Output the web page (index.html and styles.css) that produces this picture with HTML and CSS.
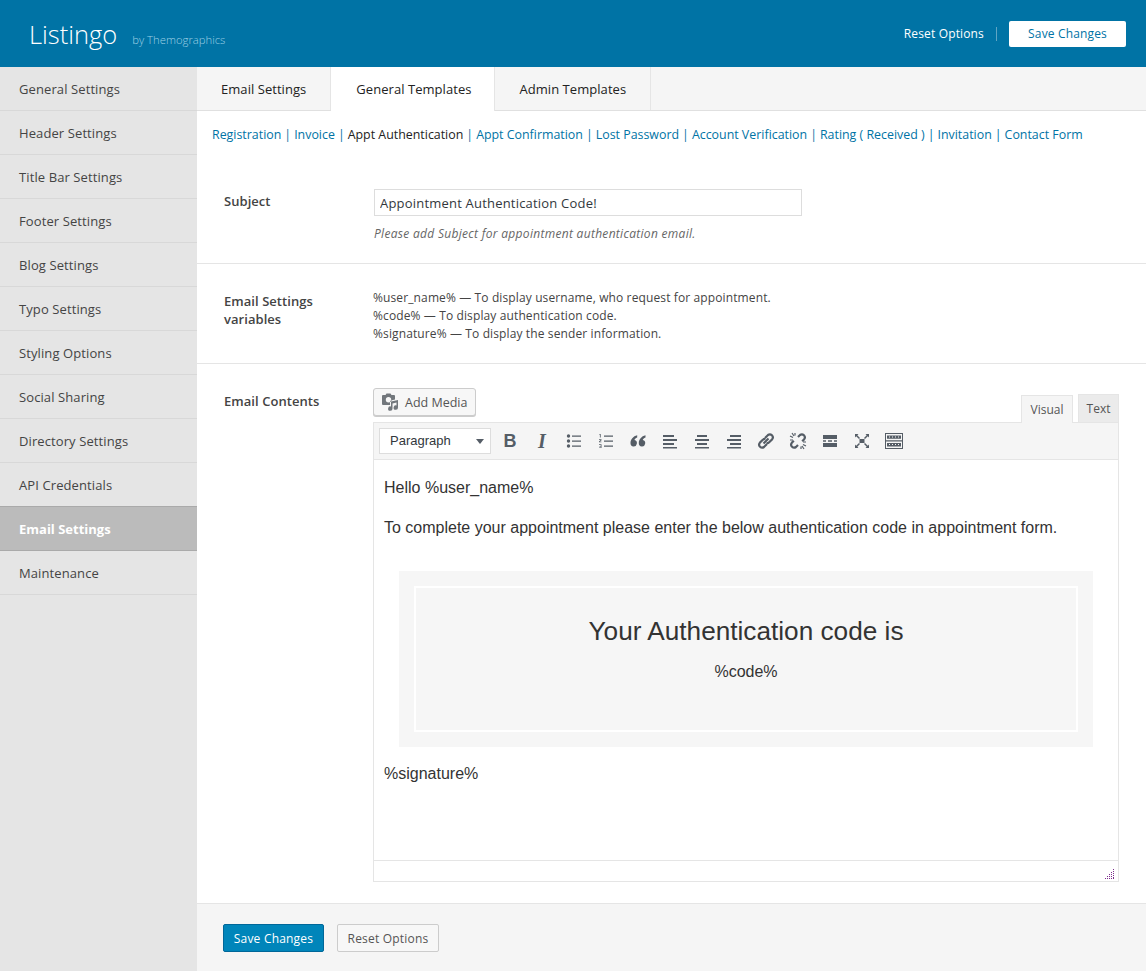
FILE: index.html
```html
<!DOCTYPE html>
<html lang="en">
<head>
<meta charset="utf-8">
<title>Listingo Options</title>
<link rel="stylesheet" href="styles.css">
</head>
<body>
<header class="topbar">
    <div class="brand">
        <span class="brand-name">Listingo</span>
        <span class="brand-by">by Themographics</span>
    </div>
    <div class="top-actions">
        <a class="top-reset">Reset Options</a>
        <button class="top-save" type="button">Save Changes</button>
    </div>
</header>

<div class="layout">
    <nav class="sidebar">
        <a>General Settings</a>
        <a>Header Settings</a>
        <a>Title Bar Settings</a>
        <a>Footer Settings</a>
        <a>Blog Settings</a>
        <a>Typo Settings</a>
        <a>Styling Options</a>
        <a>Social Sharing</a>
        <a>Directory Settings</a>
        <a>API Credentials</a>
        <a class="active">Email Settings</a>
        <a>Maintenance</a>
    </nav>

    <main class="content">
        <div class="tabs">
            <a class="tab">Email Settings</a>
            <a class="tab current">General Templates</a>
            <a class="tab">Admin Templates</a>
        </div>

        <div class="subnav">
            <a>Registration</a><i>|</i><a>Invoice</a><i>|</i><b>Appt Authentication</b><i>|</i><a>Appt Confirmation</a><i>|</i><a>Lost Password</a><i>|</i><a>Account Verification</a><i>|</i><a>Rating ( Received )</a><i>|</i><a>Invitation</a><i>|</i><a>Contact Form</a>
        </div>

        <section class="field field-subject">
            <h4 class="field-label">Subject</h4>
            <div class="field-body">
                <input class="text-input" type="text" value="Appointment Authentication Code!">
                <p class="hint">Please add Subject for appointment authentication email.</p>
            </div>
        </section>

        <section class="field field-vars">
            <h4 class="field-label">Email Settings variables</h4>
            <div class="field-body vars">
                <div>%user_name% — To display username, who request for appointment.</div>
                <div>%code% — To display authentication code.</div>
                <div>%signature% — To display the sender information.</div>
            </div>
        </section>

        <section class="field field-editor">
            <h4 class="field-label">Email Contents</h4>
            <div class="field-body">
                <div class="editor-top">
                    <button class="media-btn" type="button">
                        <svg width="18" height="18" viewBox="0 0 18 18"><path fill="#72777c" fill-rule="evenodd" d="M2 2h2.500l1-1.500h4l1 1.500H13a1 1 0 0 1 1 1v3.500l-5 1.200V12H2a1 1 0 0 1-1-1V3a1 1 0 0 1 1-1zm5.500 2a2.700 2.700 0 1 0 0 5.400 2.700 2.700 0 0 0 0-5.400z"/><path fill="#72777c" d="M10 8.500 17 7v7.500a2.200 2.200 0 1 1-1.500-2V9.500l-4 .9v5.100a2.200 2.200 0 1 1-1.500-2z"/></svg>
                        Add Media
                    </button>
                    <div class="mode-tabs">
                        <span class="mode on">Visual</span>
                        <span class="mode">Text</span>
                    </div>
                </div>
                <div class="editor">
                    <div class="toolbar">
                        <div class="format-select">Paragraph<span class="caret"></span></div>
                        <span class="tool tool-b">B</span>
                        <span class="tool tool-i">I</span>
                        <span class="tool"><svg width="16" height="16" viewBox="0 0 16 16" fill="#555d66"><circle cx="2.500" cy="3" r="1.700"/><circle cx="2.500" cy="8" r="1.700"/><circle cx="2.500" cy="13" r="1.700"/><path d="M6 2.500h9v1.200H6zM6 7.500h9v1.200H6zM6 12.500h9v1.200H6z"/></svg></span>
                        <span class="tool"><svg width="16" height="16" viewBox="0 0 16 16" fill="#555d66"><path d="M6 2.500h9v1.200H6zM6 7.500h9v1.200H6zM6 12.500h9v1.200H6z"/><path d="M1.500 1h1.200v3.600h-.8V1.900l-.4.100zM1 6.300h2.500v1L2 8.700h1.500v.6H1v-.8l1.600-1.400H1zM1 11.200h2.500v3.800H1v-.6h1.700v-.9H1.400v-.6h1.300v-1H1z"/></svg></span>
                        <span class="tool"><svg width="16" height="16" viewBox="0 0 16 16" fill="#555d66"><path d="M7.200 2.200v2.300C5.400 5.200 4.700 6 4.500 7.100A3.200 3.200 0 1 1 .5 10.200C.5 6.400 3.200 3 7.200 2.200zM15.500 2.200v2.300c-1.800.7-2.500 1.500-2.700 2.600a3.200 3.200 0 1 1-4 3.100c0-3.800 2.700-7.200 6.700-8z"/></svg></span>
                        <span class="tool"><svg width="16" height="16" viewBox="0 0 16 16" fill="#555d66"><path d="M1 2h11v2H1zM1 6h14v2H1zM1 10h11v2H1zM1 14h14v1.500H1z"/></svg></span>
                        <span class="tool"><svg width="16" height="16" viewBox="0 0 16 16" fill="#555d66"><path d="M3 2h10v2H3zM1 6h14v2H1zM3 10h10v2H3zM1 14h14v1.500H1z"/></svg></span>
                        <span class="tool"><svg width="16" height="16" viewBox="0 0 16 16" fill="#555d66"><path d="M4 2h11v2H4zM1 6h14v2H1zM4 10h11v2H4zM1 14h14v1.500H1z"/></svg></span>
                        <span class="tool"><svg width="18" height="18" viewBox="0 0 18 18" fill="none" stroke="#555d66" stroke-width="2.200"><path d="M6.500 11.500l5-5"/><path d="M8 6l3-3a3 3 0 0 1 4.200 4.200l-3 3a3 3 0 0 1-2.700.8"/><path d="M10 12l-3 3a3 3 0 0 1-4.200-4.200l3-3a3 3 0 0 1 2.700-.8"/></svg></span>
                        <span class="tool"><svg width="18" height="18" viewBox="0 0 18 18" fill="none" stroke="#555d66" stroke-width="2.200"><path d="M9 5l2-2a3 3 0 0 1 4.200 4.200l-2 2"/><path d="M9 13l-2 2a3 3 0 0 1-4.200-4.200l2-2"/><path stroke-width="1.200" d="M3 1l2 3M1 4l3 1.500M6 1v2.500M15 17l-2-3M17 14l-3-1.500M12 17v-2.500M1 8h3M14 10h3"/></svg></span>
                        <span class="tool"><svg width="16" height="16" viewBox="0 0 16 16" fill="#555d66"><path d="M1 2h14v4H1zM1 7.300h3v1.400H1zM6 7.300h4v1.400H6zM12 7.300h3v1.400h-3zM1 10h14v4H1z"/></svg></span>
                        <span class="tool"><svg width="16" height="16" viewBox="0 0 16 16" fill="#555d66"><path d="M5.500 6h5v4h-5z"/><path d="M1 1h3.500L3.300 2.200 6 5 5 6 2.200 3.300 1 4.500zM15 1v3.500l-1.200-1.200L11 6l-1-1 2.700-2.800L11.500 1zM1 15v-3.500l1.200 1.200L5 10l1 1-2.700 2.800L4.500 15zM15 15h-3.500l1.200-1.200L10 11l1-1 2.800 2.700 1.200-1.200z"/></svg></span>
                        <span class="tool"><svg width="20" height="16" viewBox="0 0 20 16" fill="#555d66"><path fill-rule="evenodd" d="M1 0h18v16H1zM2 1v6.300h16V1zM2 8.500V15h16V8.500z"/><path d="M3 2.500h14v3.300H3zM3 10h14v3.500H3z"/><path fill="#f5f5f5" d="M5 3.500h1v1H5zM8 3.500h1v1H8zM11 3.500h1v1h-1zM14 3.500h1v1h-1zM5 11h1v1H5zM8 11h1v1H8zM11 11h1v1h-1zM14 11h1v1h-1z"/></svg></span>
                    </div>
                    <div class="editor-body">
                        <p>Hello %user_name%</p>
                        <p>To complete your appointment please enter the below authentication code in appointment form.</p>
                        <div class="code-box">
                            <div class="code-inner">
                                <h2>Your Authentication code is</h2>
                                <div class="code-value">%code%</div>
                            </div>
                        </div>
                        <p>%signature%</p>
                    </div>
                    <div class="statusbar">
                        <svg class="grip" width="10" height="10" viewBox="0 0 10 10" fill="#7e2f8e"><path d="M8 0h1v1H8zM8 2h1v1H8zM6 3h1v1H6zM8 4h1v1H8zM6 5h1v1H6zM4 5h1v1H4zM8 6h1v1H8zM6 7h1v1H6zM4 7h1v1H4zM2 7h1v1H2zM8 8h1v1H8zM6 9h1v1H6zM4 9h1v1H4zM2 9h1v1H2zM0 9h1v1H0zM8 9h1v1H8z"/></svg>
                    </div>
                </div>
            </div>
        </section>

        <footer class="bottom-bar">
            <button class="btn-primary" type="button">Save Changes</button>
            <button class="btn-plain" type="button">Reset Options</button>
        </footer>
    </main>
</div>
</body>
</html>
```

FILE: styles.css
```css
* {
    box-sizing: border-box;
}

body {
    font-family: "Open Sans", sans-serif;
    font-size: 13px;
    color: #444;
    background-color: #fff;
    margin: 0;
}

.topbar {
    height: 67px;
    background-color: #0073a5;
    display: flex;
    align-items: center;
    justify-content: space-between;
    padding: 0 20px 0 29px;
}

.brand {
    display: flex;
    align-items: baseline;
}

.brand-name {
    color: #fff;
    font-size: 25.500px;
    font-weight: 300;
    margin-right: 15px;
}

.brand-by {
    color: #9fd0e4;
    font-size: 11.300px;
    font-weight: 300;
}

.top-actions {
    display: flex;
    align-items: center;
}

.top-reset {
    color: #fff;
    font-size: 12px;
    letter-spacing: 0.15px;
    padding-right: 12px;
    border-right: 1px solid #5fa5c4;
    margin-right: 12px;
    line-height: 14px;
}

.top-save {
    width: 117px;
    height: 26px;
    background-color: #fff;
    border: none;
    border-radius: 2px;
    color: #0073a5;
    font-family: inherit;
    font-size: 12px;
    letter-spacing: 0.15px;
    padding: 0;
}

.layout {
    display: flex;
    height: 904px;
}

.sidebar {
    width: 197px;
    background-color: #e5e5e5;
    flex-shrink: 0;
}

.sidebar a {
    display: block;
    height: 44px;
    line-height: 45px;
    padding-left: 19px;
    color: #444;
    letter-spacing: 0.1px;
    border-bottom: 1px solid #d8d8d8;
}

.sidebar a.active {
    background-color: #bbb;
    color: #fff;
    font-weight: 700;
    letter-spacing: 0;
    border-bottom-color: #aaa;
    box-shadow: 0 -1px 0 #aaa;
}

.content {
    flex: 1;
    min-width: 0;
}

.tabs {
    display: flex;
    height: 44px;
    background-color: #f5f5f5;
    border-bottom: 1px solid #e0e0e0;
}

.tab {
    padding: 0 24px;
    line-height: 45px;
    color: #222;
    letter-spacing: 0.05px;
    border-right: 1px solid #e5e5e5;
}

.tab.current {
    background-color: #fff;
    height: 44px;
    padding: 0 23px 0 25px;
}

.subnav {
    padding: 16px 0 0 15px;
    height: 56px;
    font-size: 12.400px;
    line-height: 16px;
    white-space: nowrap;
}

.subnav a {
    color: #0073a5;
}

.subnav b {
    color: #222;
    font-weight: 400;
}

.subnav i {
    font-style: normal;
    color: #0073a5;
    margin: 0 3px;
}

.field {
    display: flex;
    border-bottom: 1px solid #e5e5e5;
}

.field-label {
    width: 176px;
    margin: 0;
    padding-left: 27px;
    flex-shrink: 0;
    font-size: 13px;
    font-weight: 600;
    letter-spacing: 0.05px;
    line-height: 18px;
    color: #444;
    padding-right: 30px;
}

.field-body {
    flex: 1;
    min-width: 0;
}

.field-subject {
    height: 97px;
    padding-top: 22px;
}

.field-subject .field-label {
    padding-top: 3px;
}

.text-input {
    display: block;
    width: 428px;
    height: 27px;
    margin-left: 1px;
    padding: 0 5px;
    border: 1px solid #ddd;
    font-family: inherit;
    font-size: 13px;
    letter-spacing: 0.2px;
    color: #32373c;
}

.hint {
    margin: 10px 0 0 1px;
    font-size: 12px;
    letter-spacing: 0.3px;
    font-style: italic;
    color: #666;
    line-height: 16px;
}

.field-vars {
    height: 100px;
    padding-top: 28px;
}

.vars {
    font-size: 12px;
    letter-spacing: 0.12px;
    line-height: 18px;
    color: #444;
    margin-top: -3px;
}

.field-editor {
    height: 540px;
    padding-top: 24px;
    border-bottom: 1px solid #e5e5e5;
}

.field-editor .field-label {
    padding-top: 4px;
}

.editor-top {
    display: flex;
    justify-content: space-between;
    align-items: flex-end;
    height: 34px;
    width: 746px;
}

.media-btn {
    display: flex;
    align-items: center;
    gap: 6px;
    align-self: flex-start;
    height: 28px;
    width: 103px;
    padding: 0 0 0 7px;
    background-color: #f7f7f7;
    border: 1px solid #ccc;
    border-radius: 3px;
    box-shadow: 0 1px 0 #ccc;
    color: #555;
    font-family: inherit;
    font-size: 12.500px;
}

.mode-tabs {
    display: flex;
    gap: 5px;
}

.mode {
    height: 28px;
    width: 41px;
    text-align: center;
    font-size: 12px;
    line-height: 27px;
    color: #555;
    background-color: #ebebeb;
    border: 1px solid #e5e5e5;
    border-bottom: none;
}

.mode.on {
    width: 52px;
    background-color: #f5f5f5;
    border-color: #e5e5e5;
    position: relative;
    top: 1px;
}

.editor {
    width: 746px;
    height: 460px;
    border: 1px solid #e5e5e5;
    display: flex;
    flex-direction: column;
}

.toolbar {
    height: 37px;
    flex-shrink: 0;
    background-color: #f5f5f5;
    border-bottom: 1px solid #e5e5e5;
    display: flex;
    align-items: center;
    padding-left: 5px;
}

.format-select {
    width: 112px;
    height: 26px;
    background-color: #fff;
    border: 1px solid #ddd;
    font-family: "Liberation Sans", Arial, sans-serif;
    font-size: 13px;
    line-height: 24px;
    padding-left: 10px;
    color: #32373c;
    position: relative;
    margin-right: 3px;
}

.caret {
    position: absolute;
    right: 6px;
    top: 10px;
    border-left: 4px solid transparent;
    border-right: 4px solid transparent;
    border-top: 5px solid #555d66;
}

.tool {
    width: 32px;
    height: 26px;
    display: flex;
    align-items: center;
    justify-content: center;
    color: #555d66;
    flex-shrink: 0;
}

.tool-b {
    font-family: "Liberation Sans", Arial, sans-serif;
    font-size: 18px;
    font-weight: 700;
}

.tool-i {
    font-family: "Liberation Serif", serif;
    font-size: 20px;
    font-weight: 700;
    font-style: italic;
}

.editor-body {
    flex: 1;
    padding: 18px 10px 0;
    font-family: "Liberation Sans", Arial, sans-serif;
    font-size: 16px;
    line-height: 20px;
    color: #333;
}

.editor-body p {
    margin: 0 0 20px;
}

.code-box {
    width: 694px;
    height: 176px;
    margin: 33px 0 17px 15px;
    padding: 15px;
    background-color: #f6f6f6;
}

.code-inner {
    height: 146px;
    border: 2px solid #fff;
    text-align: center;
    padding-top: 28px;
}

.code-inner h2 {
    margin: 0;
    font-size: 26.200px;
    font-weight: 400;
    line-height: 30px;
    color: #333;
}

.code-value {
    margin-top: 16px;
}

.statusbar {
    height: 21px;
    flex-shrink: 0;
    border-top: 1px solid #e5e5e5;
    position: relative;
}

.grip {
    position: absolute;
    right: 3px;
    bottom: 2px;
}

.bottom-bar {
    height: 67px;
    background-color: #f5f5f5;
    display: flex;
    align-items: center;
    gap: 13px;
    padding: 0 0 0 26px;
}

.btn-primary {
    width: 101px;
    height: 28px;
    background-color: #0085ba;
    border: 1px solid #006799;
    border-radius: 2px;
    color: #fff;
    font-family: inherit;
    font-size: 12px;
    letter-spacing: 0.2px;
    padding: 2px 0 0;
}

.btn-plain {
    width: 102px;
    height: 28px;
    background-color: #f7f7f7;
    border: 1px solid #ccc;
    border-radius: 2px;
    color: #555;
    font-family: inherit;
    font-size: 12px;
    letter-spacing: 0.2px;
    padding: 2px 0 0;
}
```
